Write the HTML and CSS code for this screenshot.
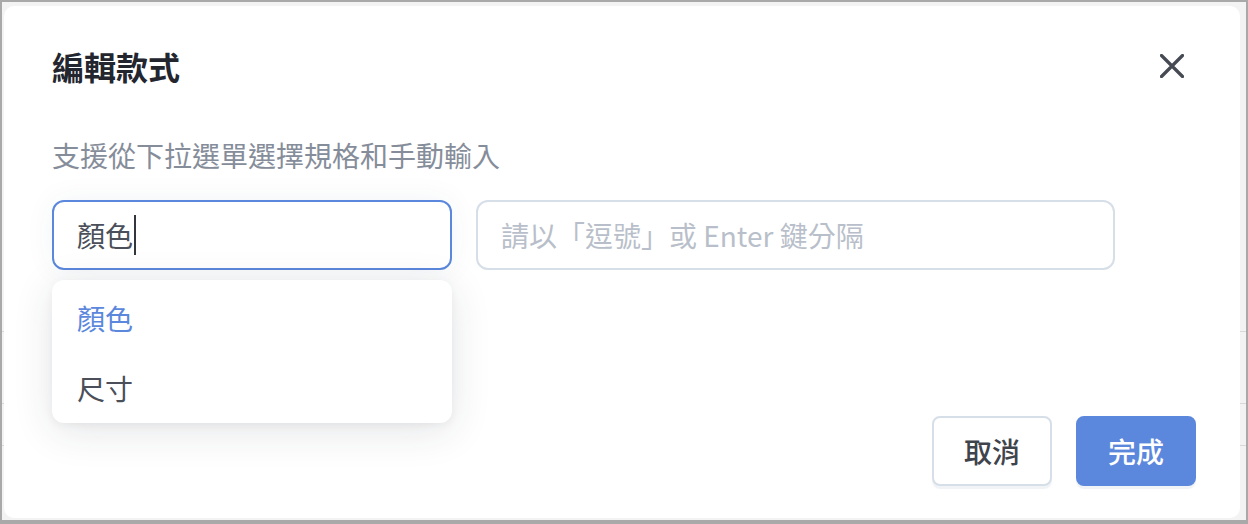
FILE: index.html
```html
<!DOCTYPE html>
<html lang="zh-Hant">
<head>
<meta charset="utf-8">
<title>編輯款式</title>
<link rel="stylesheet" href="styles.css">
</head>
<body>
<div class="frame">
  <div class="page">
    <div class="bg-head"></div>
    <div class="bg-row"></div>
    <div class="bg-row short"></div>
  </div>
  <div class="modal">
    <div class="header">
      <h2 class="title">編輯款式</h2>
      <button class="close" aria-label="關閉">
        <svg width="24" height="24" viewBox="0 0 24 24"><path d="M1.5 1.5 L22.5 22.5 M22.5 1.5 L1.5 22.5" stroke="#464a53" stroke-width="3.2" stroke-linecap="round" fill="none"/></svg>
      </button>
    </div>
    <p class="desc">支援從下拉選單選擇規格和手動輸入</p>
    <div class="fields">
      <div class="select-wrap">
        <div class="input active"><span>顏色</span><span class="caret"></span></div>
        <ul class="dropdown">
          <li class="opt selected">顏色</li>
          <li class="opt">尺寸</li>
        </ul>
      </div>
      <div class="input values"><span class="placeholder">請以「逗號」或 Enter 鍵分隔</span></div>
    </div>
    <div class="footer">
      <button class="btn cancel">取消</button>
      <button class="btn primary">完成</button>
    </div>
  </div>
</div>
</body>
</html>
```

FILE: styles.css
```css
html, body {
  margin: 0;
  padding: 0;
}
body {
  width: 1248px;
  height: 524px;
  overflow: hidden;
  font-family: "Noto Sans CJK TC", "Noto Sans", sans-serif;
  background: #a9a9a9;
}
.frame {
  position: relative;
  box-sizing: border-box;
  width: 1248px;
  height: 524px;
  border: 2px solid #a9a9a9;
  border-bottom-width: 4px;
  background: #f3f3f3;
}
.page {
  display: flex;
  flex-direction: column;
}
.bg-head {
  height: 329px;
  border-bottom: 1px solid #d8d8d8;
}
.bg-row {
  height: 71px;
  border-bottom: 1px solid #d8d8d8;
}
.bg-row.short {
  height: 41px;
}
.modal {
  position: absolute;
  left: 2px;
  top: 4px;
  width: 1236px;
  height: 512px;
  box-sizing: border-box;
  background: #fff;
  border-radius: 10px;
  padding: 36px 44px 32px 48px;
  display: flex;
  flex-direction: column;
}
.header {
  display: flex;
  justify-content: space-between;
  align-items: center;
  height: 48px;
}
.title {
  margin: 0;
  font-size: 32px;
  font-weight: 700;
  line-height: 48px;
  color: #23262e;
}
.close {
  width: 48px;
  height: 48px;
  border: 0;
  padding: 0;
  background: none;
  display: flex;
  align-items: center;
  justify-content: center;
}
.desc {
  margin: 45px 0 0;
  font-size: 28px;
  line-height: 40px;
  color: #868d9a;
}
.fields {
  display: flex;
  gap: 24px;
  margin-top: 25px;
}
.select-wrap {
  position: relative;
  width: 400px;
}
.input {
  box-sizing: border-box;
  height: 70px;
  border: 2px solid #d6dee8;
  border-radius: 12px;
  padding: 0 23px;
  display: flex;
  align-items: center;
  font-size: 28px;
  color: #4a4f59;
  background: #fff;
}
.input.active {
  border-color: #5b87dc;
  box-shadow: 0 0 30px rgba(40, 60, 110, 0.06);
}
.caret {
  display: inline-block;
  width: 2px;
  height: 40px;
  background: #33363d;
  margin-left: 1px;
}
.values {
  width: 639px;
}
.placeholder {
  color: #b9bfca;
}
.dropdown {
  position: absolute;
  top: 80px;
  left: 0;
  width: 400px;
  height: 143px;
  box-sizing: border-box;
  margin: 0;
  padding: 3px 0 0;
  list-style: none;
  background: #fff;
  border-radius: 12px;
  box-shadow: 0 8px 40px rgba(30, 40, 60, 0.12), 0 2px 8px rgba(0, 0, 0, 0.05);
}
.opt {
  height: 70px;
  line-height: 70px;
  padding-left: 25px;
  font-size: 28px;
  color: #4a4f59;
}
.opt.selected {
  color: #5b87dc;
}
.footer {
  margin-top: auto;
  display: flex;
  justify-content: flex-end;
  gap: 24px;
}
.btn {
  box-sizing: border-box;
  width: 120px;
  height: 70px;
  border-radius: 8px;
  font-family: inherit;
  font-size: 28px;
  font-weight: 500;
  padding: 0;
  box-shadow: 0 3px 0 rgba(200, 210, 225, 0.25);
}
.cancel {
  background: #fff;
  border: 2px solid #d6dee8;
  color: #3f434b;
}
.primary {
  background: #5b87dc;
  border: 2px solid #5b87dc;
  color: #fff;
}
```
